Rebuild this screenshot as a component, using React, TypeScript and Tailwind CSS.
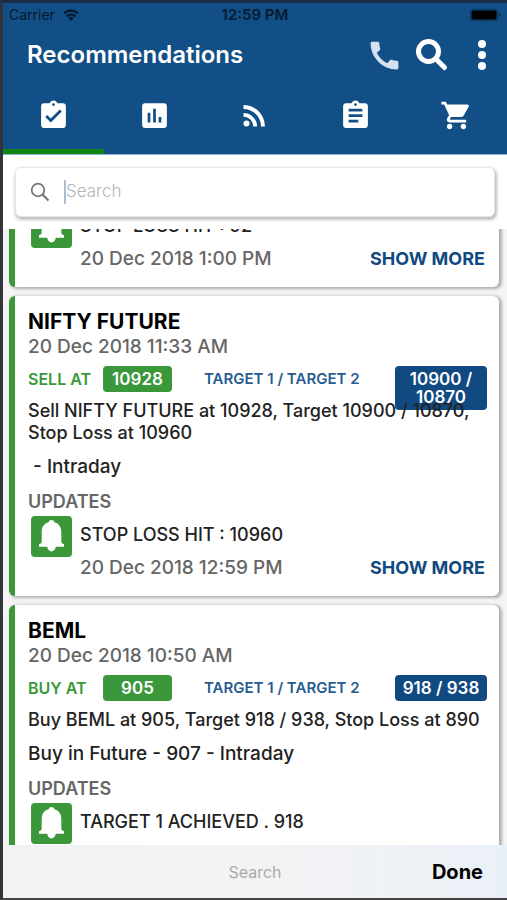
import type { ReactNode } from 'react';
import { MdAssessment, MdAssignment, MdAssignmentTurnedIn, MdCall, MdRssFeed, MdShoppingCart } from 'react-icons/md';

type Call = {
  name: string;
  date: string;
  action: string;
  price: string;
  targets: string;
  text: string;
  note: string;
  update: string;
  updateDate?: string;
};

const calls: Call[] = [
  {
    name: 'NIFTY FUTURE',
    date: '20 Dec 2018 11:33 AM',
    action: 'SELL AT',
    price: '10928',
    targets: '10900 / 10870',
    text: 'Sell NIFTY FUTURE at 10928, Target 10900 / 10870, Stop Loss at 10960',
    note: ' - Intraday',
    update: 'STOP LOSS HIT : 10960',
    updateDate: '20 Dec 2018 12:59 PM',
  },
  {
    name: 'BEML',
    date: '20 Dec 2018 10:50 AM',
    action: 'BUY AT',
    price: '905',
    targets: '918 / 938',
    text: 'Buy BEML at 905, Target 918 / 938, Stop Loss at 890',
    note: 'Buy in Future - 907 - Intraday',
    update: 'TARGET 1 ACHIEVED . 918',
  },
];

const tabs = [
  { label: 'Recommendations', icon: MdAssignmentTurnedIn },
  { label: 'Charts', icon: MdAssessment },
  { label: 'Feed', icon: MdRssFeed },
  { label: 'Reports', icon: MdAssignment },
  { label: 'Cart', icon: MdShoppingCart },
];

function StatusBar() {
  return (
    <div className="grid h-6 grid-cols-3 items-center px-1.5 text-[15px] text-[#071a30]">
      <div className="flex items-center gap-2 text-sm">
        <span>Carrier</span>
        <svg width="16" height="12" viewBox="0 0 16 12">
          <path d="M8 12 5.3 9a4 4 0 0 1 5.4 0z" fill="currentColor" />
          <path d="M3.6 7.4a6.3 6.3 0 0 1 8.8 0M1 4.5a10 10 0 0 1 14 0" fill="none" stroke="currentColor" strokeWidth="2.3" />
        </svg>
      </div>
      <span className="text-center font-semibold">12:59 PM</span>
      <svg className="justify-self-end" width="31" height="12" viewBox="0 0 31 12">
        <rect x="0.5" y="0.5" width="27" height="11" rx="2.5" fill="none" stroke="#071a30" strokeOpacity="0.5" />
        <rect x="1.5" y="1.5" width="25" height="9" rx="1.5" fill="#000" />
        <path d="M29 4v4c1.3 0 1.5-4 0-4z" fill="#071a30" />
      </svg>
    </div>
  );
}

function Header() {
  return (
    <header className="border-b border-[#8ab4d8] bg-[#114f86] text-white">
      <StatusBar />
      <div className="flex h-14 items-center pl-6 pr-2">
        <h1 className="flex-1 text-2xl font-semibold">Recommendations</h1>
        <button type="button" aria-label="Call" className="mr-3 text-[#d3e1f3]">
          <MdCall size={37} />
        </button>
        <button type="button" aria-label="Search" className="mr-7">
          <svg width="34" height="34" viewBox="0 0 34 34" fill="none" stroke="currentColor">
            <circle cx="13.5" cy="13.5" r="10" strokeWidth="5" />
            <path d="m21 21 8.500 8.500" strokeWidth="5" strokeLinecap="round" />
          </svg>
        </button>
        <button type="button" aria-label="More" className="mr-3">
          <svg width="10" height="32" viewBox="0 0 10 32" fill="currentColor">
            <circle cx="5" cy="5" r="4" />
            <circle cx="5" cy="16" r="4" />
            <circle cx="5" cy="27" r="4" />
          </svg>
        </button>
      </div>
      <nav className="grid grid-cols-5">
        {tabs.map(({ label, icon: Icon }, i) => (
          <button
            key={label}
            type="button"
            aria-label={label}
            className={
              i === 0
                ? 'flex h-[71px] justify-center border-b-5 border-[#118411] pt-4'
                : 'flex h-[71px] justify-center pt-4'
            }
          >
            <Icon size={33} />
          </button>
        ))}
      </nav>
    </header>
  );
}

function SearchBox() {
  return (
    <div className="px-3 pt-3 pb-3">
      <label className="flex h-[50px] items-center rounded-md border border-gray-200 bg-white pl-3.5 shadow-[1px_2px_3px_1px_rgba(0,0,0,0.25)]">
        <svg width="20" height="20" viewBox="0 0 20 20" fill="none" stroke="#777" strokeWidth="1.8">
          <circle cx="8" cy="8" r="6.3" />
          <path d="m12.500 12.500 6 6" strokeWidth="2.2" />
        </svg>
        <span className="ml-3.5 h-6 w-0.5 bg-[#a9bfd6]" />
        <input
          type="text"
          placeholder="Search"
          aria-label="Search"
          className="min-w-0 flex-1 bg-transparent text-[17px] font-light outline-none placeholder:text-[#b4b4b8]"
        />
      </label>
    </div>
  );
}

function Card({ children }: { children: ReactNode }) {
  return (
    <li className="rounded-md border-l-6 border-[#3a983a] bg-white pb-4 pl-[13px] pr-3 shadow-[2px_1px_3px_1px_rgba(0,0,0,0.28)]">
      {children}
    </li>
  );
}

function Update({ text, date }: { text: string; date?: string }) {
  return (
    <div className="flex gap-2 pl-[3px]">
      <svg className="shrink-0" width="41" height="41" viewBox="0 0 41 41">
        <rect width="41" height="41" rx="4" fill="#3a983a" />
        <path
          d="M20.500 4c1.500 0 2.600.9 2.800 2.200 4.600 1.200 7 4.800 7 9.800v9.500c0 1.500.9 2.300 2.700 2.700v2.600h-8.300c-.3 2.700-1.900 4.700-4.200 4.700s-3.900-2-4.200-4.700H8v-2.600c1.800-.4 2.700-1.200 2.700-2.700V16c0-5 2.400-8.600 7-9.800C17.900 4.900 19 4 20.500 4z"
          fill="#fff"
        />
      </svg>
      <div className="flex-1">
        <p className="pt-[7px] text-lg leading-6 font-medium text-[#222]">{text}</p>
        {date && (
          <div className="mt-[9px] flex items-center justify-between leading-6">
            <span className="text-[19px] leading-6 font-medium text-[#666]">{date}</span>
            <button type="button" className="mr-0.5 text-lg leading-6 font-bold text-[#114a80]">
              SHOW MORE
            </button>
          </div>
        )}
      </div>
    </div>
  );
}

function CallCard({ call }: { call: Call }) {
  return (
    <Card>
      <h2 className="pt-[13px] text-[21px] leading-[25px] font-bold text-black">{call.name}</h2>
      <p className="text-[19px] leading-[26px] font-medium text-[#666]">{call.date}</p>
      {/* long targets spill below the row, under the description */}
      <div className="mt-1.5 grid h-[26px] grid-cols-[75px_69px_1fr_92px] items-start">
        <span className="text-base leading-[26px] font-semibold text-[#3a983a]">{call.action}</span>
        <span className="rounded bg-[#3a983a] text-center text-[17px] leading-[26px] font-semibold text-white">{call.price}</span>
        <span className="pl-8 text-[15px] leading-[26px] font-semibold whitespace-nowrap text-[#285b91]">TARGET 1 / TARGET 2</span>
        <span className="rounded bg-[#114a80] px-1 py-1 text-center text-[17px] leading-[18px] font-semibold text-white">{call.targets}</span>
      </div>
      <p className="mt-2 text-lg leading-[22px] font-medium text-[#222]">{call.text}</p>
      <p className="mt-3 text-[19px] leading-[22px] font-medium whitespace-pre text-[#222]">{call.note}</p>
      <h3 className="mt-[13px] mb-[3px] text-lg leading-[22px] font-semibold text-[#666]">UPDATES</h3>
      <Update text={call.update} date={call.updateDate} />
    </Card>
  );
}

export default function App() {
  return (
    <div className="flex h-screen flex-col border-t-3 border-b-2 border-l-3 border-t-[#1a2d47] border-b-[#444] border-l-[#33333a] bg-white font-['Inter',sans-serif]">
      <Header />
      <SearchBox />
      <main className="min-h-0 flex-1 overflow-hidden bg-[#f4f4f4]">
        <ul className="-mt-[22px] flex flex-col gap-[9px] pr-2 pl-1.5">
          <Card>
            <Update text="STOP LOSS HIT : 92" date="20 Dec 2018 1:00 PM" />
          </Card>
          {calls.map((call) => (
            <CallCard key={call.name} call={call} />
          ))}
        </ul>
      </main>
      <footer className="grid h-[53px] grid-cols-3 items-center bg-linear-to-r from-[#f0f3f1] via-[#f3f3f4] to-[#eaf0f7] px-6">
        <span className="col-start-2 text-center text-base text-[#aaa]">Search</span>
        <button type="button" className="justify-self-end text-xl font-bold text-black">
          Done
        </button>
      </footer>
    </div>
  );
}
